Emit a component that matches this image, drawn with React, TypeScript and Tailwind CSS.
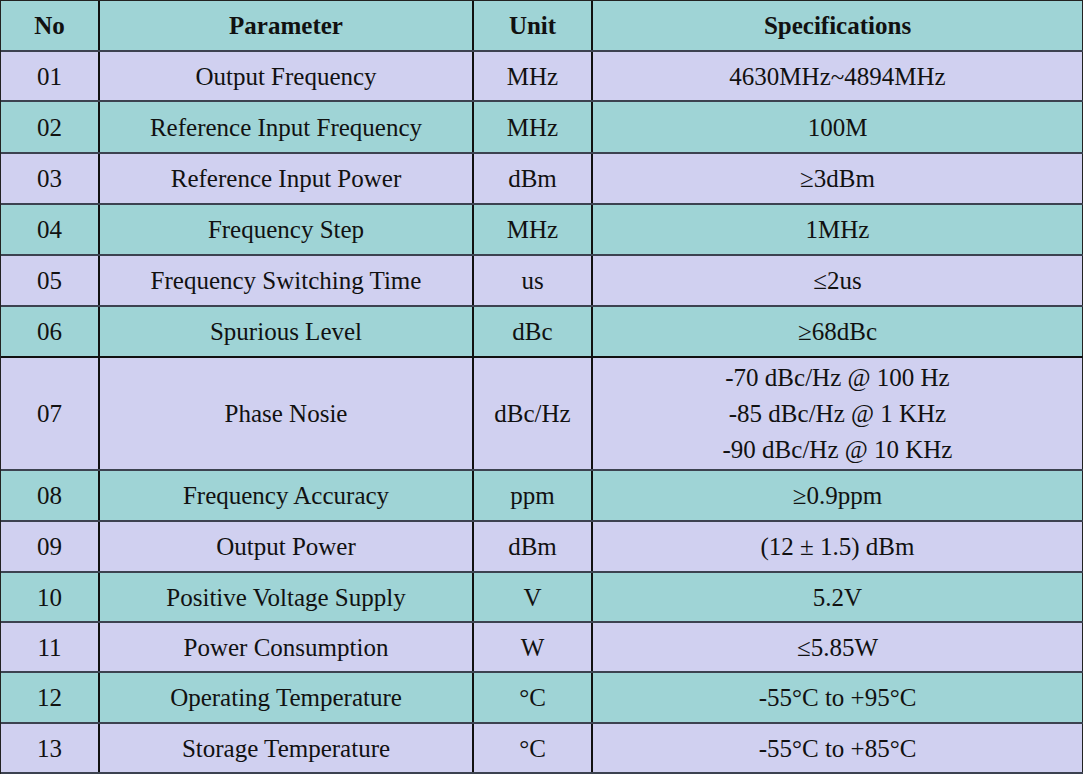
import React from "react";

type Row = { no: string; param: string; unit: string; spec: string[]; h: string; bg: string; border: string };

const TEAL = "bg-[#9fd4d6]";
const LAV = "bg-[#d0d0f0]";

const rows: Row[] = [
  { no: "01", param: "Output Frequency", unit: "MHz", spec: ["4630MHz~4894MHz"], h: "h-[50px]", bg: LAV, border: "border-[#3c4250]" },
  { no: "02", param: "Reference Input Frequency", unit: "MHz", spec: ["100M"], h: "h-[52px]", bg: TEAL, border: "border-[#3c4250]" },
  { no: "03", param: "Reference Input Power", unit: "dBm", spec: ["≥3dBm"], h: "h-[51px]", bg: LAV, border: "border-[#3c4250]" },
  { no: "04", param: "Frequency Step", unit: "MHz", spec: ["1MHz"], h: "h-[51px]", bg: TEAL, border: "border-[#3c4250]" },
  { no: "05", param: "Frequency Switching Time", unit: "us", spec: ["≤2us"], h: "h-[51px]", bg: LAV, border: "border-[#3c4250]" },
  { no: "06", param: "Spurious Level", unit: "dBc", spec: ["≥68dBc"], h: "h-[51px]", bg: TEAL, border: "border-[#111]" },
  { no: "07", param: "Phase Nosie", unit: "dBc/Hz", spec: ["-70 dBc/Hz @ 100 Hz", "-85 dBc/Hz @ 1 KHz", "-90 dBc/Hz @ 10 KHz"], h: "h-[113px]", bg: LAV, border: "border-[#3c4250]" },
  { no: "08", param: "Frequency Accuracy", unit: "ppm", spec: ["≥0.9ppm"], h: "h-[51px]", bg: TEAL, border: "border-[#3c4250]" },
  { no: "09", param: "Output Power", unit: "dBm", spec: ["(12 ± 1.5) dBm"], h: "h-[51px]", bg: LAV, border: "border-[#3c4250]" },
  { no: "10", param: "Positive Voltage Supply", unit: "V", spec: ["5.2V"], h: "h-[50px]", bg: TEAL, border: "border-[#3c4250]" },
  { no: "11", param: "Power Consumption", unit: "W", spec: ["≤5.85W"], h: "h-[50px]", bg: LAV, border: "border-[#3c4250]" },
  { no: "12", param: "Operating Temperature", unit: "°C", spec: ["-55°C to +95°C"], h: "h-[51px]", bg: TEAL, border: "border-[#3c4250]" },
  { no: "13", param: "Storage Temperature", unit: "°C", spec: ["-55°C to +85°C"], h: "h-[50px]", bg: LAV, border: "border-[#3c4250]" },
];

function Cell({ w, children, last }: { w: string; children: React.ReactNode; last?: boolean }) {
  return (
    <div className={`${w} h-full flex flex-col items-center justify-center ${last ? "border-r border-[#222]" : "border-r-2 border-[#111]"}`}>
      {children}
    </div>
  );
}

export default function App() {
  return (
    <div
      className="w-[1083px] h-[774px] overflow-hidden bg-white text-[#111] text-[25px] leading-none"
      style={{ fontFamily: '"Liberation Serif", "Times New Roman", serif' }}
    >
      <div className="border-t border-l border-[#222] w-[1083px]">
        <div className={`flex h-[51px] ${TEAL} border-b-2 border-[#3c4250] font-bold`}>
          <Cell w="w-[99px]">No</Cell>
          <Cell w="w-[374px]">Parameter</Cell>
          <Cell w="w-[119px]">Unit</Cell>
          <Cell w="flex-1" last>Specifications</Cell>
        </div>
        {rows.map((r) => (
          <div key={r.no} className={`flex ${r.h} ${r.bg} border-b-2 ${r.border}`}>
            <Cell w="w-[99px]">{r.no}</Cell>
            <Cell w="w-[374px]">{r.param}</Cell>
            <Cell w="w-[119px]">{r.unit}</Cell>
            <Cell w="flex-1" last>
              <div className="flex flex-col items-center gap-[11px]">
                {r.spec.map((s) => (
                  <span key={s}>{s}</span>
                ))}
              </div>
            </Cell>
          </div>
        ))}
      </div>
    </div>
  );
}
